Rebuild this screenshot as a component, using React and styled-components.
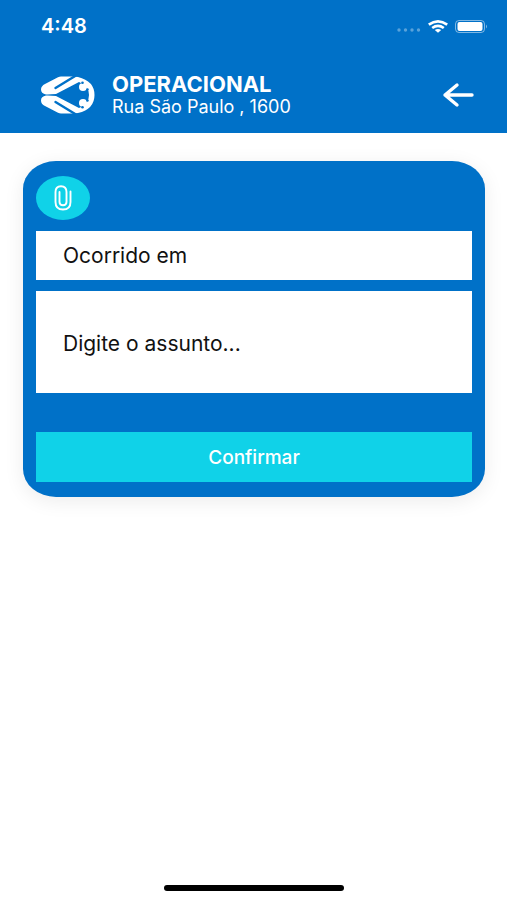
import * as React from "react";
import styled, { createGlobalStyle } from "styled-components";

const GlobalStyle = createGlobalStyle`
* {
  box-sizing: border-box;
}
body {
  margin: 0;
  background: #ffffff;
  font-family: Inter, "Liberation Sans", sans-serif;
}
button, input, textarea {
  font-family: inherit;
}
`;

const Screen = styled.div`
display: flex;
flex-direction: column;
min-height: 100vh;
`;

const Header = styled.header`
background: #0071c8;
color: #ffffff;
padding-bottom: 16px;
`;

const StatusBar = styled.div`
display: flex;
align-items: center;
justify-content: space-between;
height: 52px;
padding: 0 19px 0 41px;
`;

const Clock = styled.span`
font-size: 20px;
font-weight: 600;
line-height: 24px;
`;

const StatusIcons = styled.div`
display: flex;
align-items: center;
gap: 7px;
`;

const NavRow = styled.div`
display: flex;
align-items: center;
padding: 20px 32px 0 41px;
`;

const Titles = styled.div`
flex: 1;
margin-left: 17px;
`;

const Title = styled.h1`
margin: 0;
font-size: 22px;
font-weight: 700;
line-height: 24px;
`;

const Address = styled.p`
margin: 0;
font-size: 18px;
line-height: 21px;
`;

const BackButton = styled.button`
display: flex;
padding: 0;
border: none;
background: none;
color: #ffffff;
cursor: pointer;
`;

const Form = styled.form`
display: flex;
flex-direction: column;
align-items: stretch;
margin: 28px 22px 0 23px;
padding: 15px 13px;
border-radius: 33px / 28px;
background: #0071c8;
box-shadow: 0 4px 20px rgba(0, 0, 0, 0.08);
`;

const AttachButton = styled.button`
display: flex;
align-items: center;
justify-content: center;
width: 54px;
height: 44px;
margin-bottom: 11px;
padding: 0;
border: none;
border-radius: 50%;
background: #10d2e8;
color: #ffffff;
cursor: pointer;
`;

const fieldStyle = `
  display: block;
  width: 100%;
  border: none;
  border-radius: 0;
  outline: none;
  background: #ffffff;
  color: #111111;
  font-size: 21px;
  line-height: 24px;
  &::placeholder {
    color: #111111;
    opacity: 1;
  }
`;

const DateField = styled.input`
${fieldStyle}
height: 49px;
margin-bottom: 11px;
padding: 0 27px;
`;

const SubjectField = styled.textarea`
${fieldStyle}
height: 102px;
padding: 41px 27px 36px;
resize: none;
`;

const ConfirmButton = styled.button`
height: 50px;
margin-top: 39px;
padding: 2px 0 0;
border: none;
background: #10d2e8;
color: #ffffff;
font-size: 19px;
font-weight: 500;
line-height: 24px;
cursor: pointer;
`;

const HomeIndicator = styled.div`
width: 36%;
max-width: 180px;
height: 6px;
margin: auto auto 9px;
border-radius: 3px;
background: #000000;
`;

// upper half of the logo, the lower half is its mirror image
function LogoHalf() {
  return (
    <>
      <path
        d="M20 .5H32L37 1Q53.5 5 53.5 19.1H48Q48 10 38 6L15 18Q8 18.6 5 18.4Q0 17.5 0 13.5Q0 10 4 8L17 1.3Q18.500.5 20 .5Z"
        fill="#fff"
      />
      <path d="M35-.5L14.5 12" stroke="#0071c8" strokeWidth="2.4" strokeLinecap="round" />
      <circle cx="42" cy="11" r="4" fill="#fff" />
      <circle cx="41.500" cy="6.800" r="1.300" fill="#0071c8" />
      <circle cx="46.500" cy="13.500" r="1.200" fill="#0071c8" />
    </>
  );
}

function Logo() {
  return (
    <svg width="54" height="38" viewBox="0 0 54 38" aria-hidden="true">
      <LogoHalf />
      <g transform="matrix(1 0 0 -1 0 38)">
        <LogoHalf />
      </g>
    </svg>
  );
}

function SignalDots() {
  return (
    <svg width="24" height="13" viewBox="0 0 24 13" fill="#fff" opacity=".35" aria-hidden="true">
      <circle cx="2" cy="10" r="1.7" />
      <circle cx="8.5" cy="10" r="1.7" />
      <circle cx="15" cy="10" r="1.7" />
      <circle cx="21.5" cy="10" r="1.7" />
    </svg>
  );
}

function Wifi() {
  return (
    <svg width="20" height="13" viewBox="0 0 20 13" fill="none" stroke="#fff" strokeWidth="2.7" aria-hidden="true">
      <path d="M.8 4.7Q10-1.8 19.2 4.7" />
      <path d="M4.2 8Q10 3.8 15.8 8" />
      <path d="M6.8 10Q10 7.8 13.2 10L10 12.8Z" fill="#fff" stroke="none" />
    </svg>
  );
}

function Battery() {
  return (
    <svg width="33" height="13" viewBox="0 0 33 13" aria-hidden="true">
      <rect x=".5" y=".5" width="29" height="12" rx="3.5" fill="none" stroke="#fff" opacity=".5" />
      <rect x="2.5" y="2" width="25" height="9" rx="2" fill="#fff" />
      <path d="M31 4.5Q33 6.5 31 8.5Z" fill="#fff" opacity=".5" />
    </svg>
  );
}

export default function App() {
  const [date, setDate] = React.useState("");
  const [subject, setSubject] = React.useState("");

  const handleSubmit = (event) => {
    event.preventDefault();
  };

  return (
    <Screen>
      <GlobalStyle />
      <Header>
        <StatusBar>
          <Clock>4:48</Clock>
          <StatusIcons>
            <SignalDots />
            <Wifi />
            <Battery />
          </StatusIcons>
        </StatusBar>
        <NavRow>
          <Logo />
          <Titles>
            <Title>OPERACIONAL</Title>
            <Address>Rua São Paulo , 1600</Address>
          </Titles>
          <BackButton type="button" aria-label="Voltar">
            <svg width="33" height="26" viewBox="0 0 33 26" fill="none" stroke="#fff" strokeWidth="3.4" strokeLinecap="round" strokeLinejoin="round">
              <path d="M30 13H3M15 3L3 13L15 23" />
            </svg>
          </BackButton>
        </NavRow>
      </Header>
      <Form onSubmit={handleSubmit}>
        <AttachButton type="button" aria-label="Anexar arquivo">
          <svg width="18" height="26" viewBox="0 0 18 26" fill="none" stroke="#fff" strokeWidth="1.9" strokeLinecap="round">
            <path d="M16.5 6.5V17C16.5 22 13.5 24.5 9 24.5S1.5 22 1.5 17V7C1.5 3 3.5 1.2 7 1.2S12.5 3 12.5 7V17C12.5 19.3 11.2 20.2 9 20.2S5.5 19.3 5.5 17V7" />
          </svg>
        </AttachButton>
        <DateField
          type="text"
          aria-label="Ocorrido em"
          placeholder="Ocorrido em"
          value={date}
          onChange={(event) => setDate(event.target.value)}
        />
        <SubjectField
          aria-label="Assunto"
          placeholder="Digite o assunto..."
          value={subject}
          onChange={(event) => setSubject(event.target.value)}
        />
        <ConfirmButton type="submit">Confirmar</ConfirmButton>
      </Form>
      <HomeIndicator />
    </Screen>
  );
}
